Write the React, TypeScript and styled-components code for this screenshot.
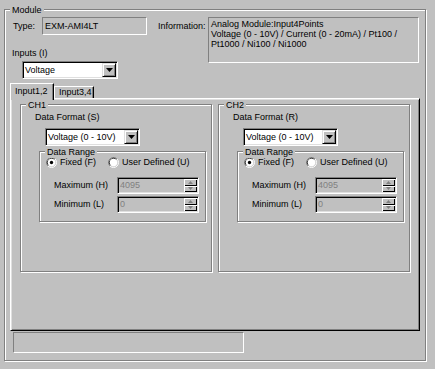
import React from 'react';
import styled, { createGlobalStyle } from 'styled-components';

const GlobalStyle = createGlobalStyle`
  html, body {
    margin: 0;
    padding: 0;
    background: #c0c0c0;
  }
  body {
    font-family: "Liberation Sans", Arial, sans-serif;
    font-size: 9px;
    line-height: 11px;
    color: #000;
  }
  #root {
    width: 435px;
    height: 369px;
    overflow: hidden;
  }
`;

const Dialog = styled.div`
  box-sizing: border-box;
  width: 435px;
  height: 369px;
  padding: 9px 0 0 4px;
  background: #c0c0c0;
`;

const GroupBox = styled.div<{ $w: number; $h: number }>`
  position: relative;
  box-sizing: border-box;
  width: ${p => p.$w}px;
  height: ${p => p.$h}px;
  border: 1px solid #808080;
  box-shadow: inset 1px 1px #fff, 1px 1px #fff;
`;

const Legend = styled.span`
  position: absolute;
  top: -5px;
  left: 5px;
  padding: 0 2px;
  background: #c0c0c0;
  line-height: 11px;
  white-space: nowrap;
`;

const Header = styled.div`
  display: flex;
  align-items: flex-start;
`;

const LeftColumn = styled.div`
  width: 153px;
`;

const TypeRow = styled.div`
  display: flex;
  margin-top: 7px;
  padding-left: 8px;
`;

const RowLabel = styled.span<{ $w: number; $top?: number }>`
  width: ${p => p.$w}px;
  margin-top: ${p => p.$top ?? 0}px;
  line-height: 18px;
  white-space: nowrap;
`;

const StaticBox = styled.div<{ $w: number; $h: number }>`
  box-sizing: border-box;
  width: ${p => p.$w}px;
  height: ${p => p.$h}px;
  border: 1px solid;
  border-color: #808080 #fff #fff #808080;
  background: #c0c0c0;
`;

const TypeValue = styled(StaticBox)`
  padding-left: 2px;
  line-height: 16px;
`;

const InfoBox = styled(StaticBox)`
  margin-top: 7px;
  padding: 1px 2px;
  line-height: 10px;
  white-space: nowrap;
`;

const FieldLabel = styled.div<{ $top: number; $left: number }>`
  margin: ${p => p.$top}px 0 0 ${p => p.$left}px;
  white-space: nowrap;
`;

const Combo = styled.div<{ $w: number; $top: number; $left: number }>`
  display: flex;
  box-sizing: border-box;
  width: ${p => p.$w}px;
  height: 18px;
  margin: ${p => p.$top}px 0 0 ${p => p.$left}px;
  padding: 1px;
  border: 1px solid;
  border-color: #808080 #fff #fff #808080;
  box-shadow: inset 1px 1px #000, inset -1px -1px #dfdfdf;
  background: #fff;
`;

const ComboText = styled.span`
  flex: 1;
  padding-left: 1px;
  line-height: 14px;
  white-space: nowrap;
`;

const RaisedButton = styled.div`
  display: flex;
  align-items: center;
  justify-content: center;
  box-sizing: border-box;
  background: #c0c0c0;
  border: 1px solid;
  border-color: #dfdfdf #000 #000 #dfdfdf;
  box-shadow: inset 1px 1px #fff, inset -1px -1px #808080;
`;

const ComboButton = styled(RaisedButton)`
  width: 14px;
`;

const TabStrip = styled.div`
  display: flex;
  align-items: flex-end;
  height: 15px;
  margin: 4px 0 0 5px;
`;

const Tab = styled.div<{ $active?: boolean; $w: number }>`
  position: relative;
  z-index: ${p => (p.$active ? 2 : 1)};
  box-sizing: border-box;
  width: ${p => p.$w}px;
  height: ${p => (p.$active ? 17 : 12)}px;
  margin-bottom: ${p => (p.$active ? -2 : 0)}px;
  padding-left: 4px;
  border-top: 1px solid #fff;
  border-left: 1px solid #fff;
  border-right: 1px solid #000;
  box-shadow: inset -1px 0 #808080;
  background: #c0c0c0;
  line-height: ${p => (p.$active ? 15 : 11)}px;
  white-space: nowrap;
`;

const TabPanel = styled.div`
  display: flex;
  gap: 6px;
  box-sizing: border-box;
  width: 410px;
  height: 233px;
  margin-left: 5px;
  padding: 5px 0 0 9px;
  border: 1px solid;
  border-color: #fff #000 #000 #fff;
  box-shadow: inset 1px 1px #dfdfdf, inset -1px -1px #808080;
`;

const RangeGroup = styled(GroupBox)`
  margin: 5px 0 0 18px;
`;

const RadioRow = styled.div`
  display: flex;
  align-items: center;
  height: 11px;
  margin: 5px 0 0 6px;
`;

const RadioItem = styled.label<{ $w: number }>`
  display: flex;
  align-items: center;
  gap: 3px;
  width: ${p => p.$w}px;
  white-space: nowrap;
`;

const RadioSvg = styled.svg`
  flex: none;
  display: block;
`;

const SpinRow = styled.div<{ $top: number }>`
  display: grid;
  grid-template-columns: 63px 82px;
  align-items: center;
  margin: ${p => p.$top}px 0 0 14px;
`;

const SpinBox = styled.div`
  display: flex;
  box-sizing: border-box;
  height: 17px;
  padding: 1px;
  border: 1px solid;
  border-color: #808080 #fff #fff #808080;
  box-shadow: inset 1px 1px #000, inset -1px -1px #dfdfdf;
  background: #c0c0c0;
`;

const SpinValue = styled.span`
  flex: 1;
  padding-left: 1px;
  line-height: 13px;
  color: #808080;
`;

const SpinButtons = styled.div`
  display: flex;
  flex-direction: column;
  width: 13px;
`;

const SpinButton = styled(RaisedButton)`
  flex: 1;
  border-width: 0;
  box-shadow: inset 1px 1px #fff, inset -1px -1px #000;
`;

const StatusBox = styled(StaticBox)`
  margin: 1px 0 0 8px;
`;

const DownArrow = () => (
  <svg width="7" height="4" viewBox="0 0 7 4">
    <polygon points="0,0 7,0 3.5,4" fill="#000" />
  </svg>
);

const SpinArrow = ({ up }: { up?: boolean }) => (
  <svg width="5" height="3" viewBox="0 0 5 3">
    <polygon points={up ? '0,3 5,3 2.5,0' : '0,0 5,0 2.5,3'} fill="#808080" />
  </svg>
);

const RadioMark = ({ checked }: { checked?: boolean }) => (
  <RadioSvg width="11" height="11" viewBox="0 0 12 12">
    <path d="M2.11 9.89A5.5 5.5 0 0 1 9.89 2.11" stroke="#808080" fill="none" />
    <path d="M9.89 2.11A5.5 5.5 0 0 1 2.11 9.89" stroke="#fff" fill="none" />
    <path d="M2.82 9.18A4.5 4.5 0 0 1 9.18 2.82" stroke="#000" fill="none" />
    <path d="M9.18 2.82A4.5 4.5 0 0 1 2.82 9.18" stroke="#dfdfdf" fill="none" />
    <circle cx="6" cy="6" r="4" fill="#fff" />
    {checked && <circle cx="6" cy="6" r="1.8" fill="#000" />}
  </RadioSvg>
);

const Spin = ({ value }: { value: string }) => (
  <SpinBox>
    <SpinValue>{value}</SpinValue>
    <SpinButtons>
      <SpinButton><SpinArrow up /></SpinButton>
      <SpinButton><SpinArrow /></SpinButton>
    </SpinButtons>
  </SpinBox>
);

const Channel = ({ name, key_ }: { name: string; key_: string }) => (
  <GroupBox $w={192} $h={168}>
    <Legend>{name}</Legend>
    <FieldLabel $top={7} $left={14}>Data Format ({key_})</FieldLabel>
    <Combo $w={95} $top={5} $left={24}>
      <ComboText>Voltage (0 - 10V)</ComboText>
      <ComboButton><DownArrow /></ComboButton>
    </Combo>
    <RangeGroup $w={167} $h={71}>
      <Legend>Data Range</Legend>
      <RadioRow>
        <RadioItem $w={64}><RadioMark checked />Fixed (F)</RadioItem>
        <RadioItem $w={100}><RadioMark />User Defined (U)</RadioItem>
      </RadioRow>
      <SpinRow $top={9}>
        <span>Maximum (H)</span>
        <Spin value="4095" />
      </SpinRow>
      <SpinRow $top={2}>
        <span>Minimum (L)</span>
        <Spin value="0" />
      </SpinRow>
    </RangeGroup>
  </GroupBox>
);

const App: React.FC = () => (
  <>
    <GlobalStyle />
    <Dialog>
      <GroupBox $w={422} $h={352}>
        <Legend>Module</Legend>
        <Header>
          <LeftColumn>
            <TypeRow>
              <RowLabel $w={29}>Type:</RowLabel>
              <TypeValue $w={105} $h={18}>EXM-AMI4LT</TypeValue>
            </TypeRow>
            <FieldLabel $top={13} $left={7}>Inputs (I)</FieldLabel>
            <Combo $w={96} $top={2} $left={17}>
              <ComboText>Voltage</ComboText>
              <ComboButton><DownArrow /></ComboButton>
            </Combo>
          </LeftColumn>
          <RowLabel $w={50} $top={7}>Information:</RowLabel>
          <InfoBox $w={211} $h={46}>
            Analog Module:Input4Points<br />
            Voltage (0 - 10V) / Current (0 - 20mA) / Pt100 /<br />
            Pt1000 / Ni100 / Ni1000
          </InfoBox>
        </Header>
        <TabStrip>
          <Tab $active $w={44}>Input1,2</Tab>
          <Tab $w={40}>Input3,4</Tab>
        </TabStrip>
        <TabPanel>
          <Channel name="CH1" key_="S" />
          <Channel name="CH2" key_="R" />
        </TabPanel>
        <StatusBox $w={231} $h={21} />
      </GroupBox>
    </Dialog>
  </>
);

export default App;
